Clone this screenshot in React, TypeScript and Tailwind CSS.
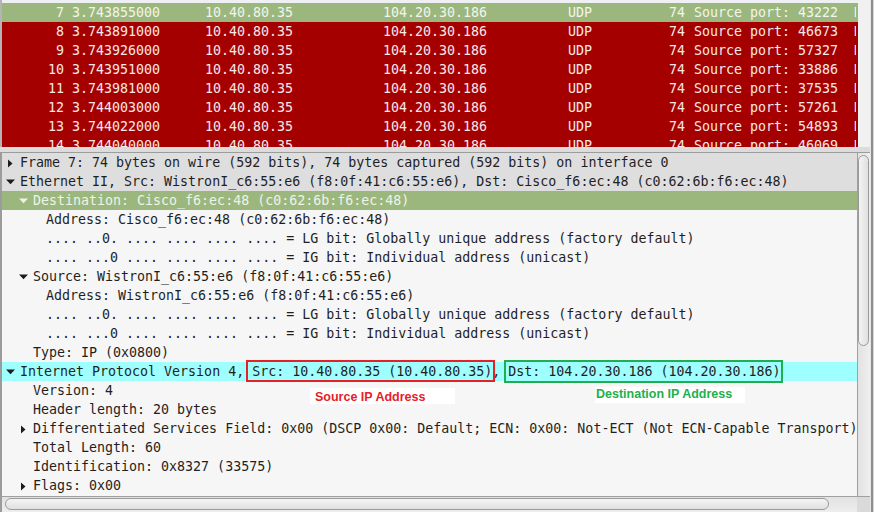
import clsx from "clsx";

const PACKETS = [
  { no: 7, time: "3.743855000", port: "43222", sel: true },
  { no: 8, time: "3.743891000", port: "46673" },
  { no: 9, time: "3.743926000", port: "57327" },
  { no: 10, time: "3.743951000", port: "33886" },
  { no: 11, time: "3.743981000", port: "37535" },
  { no: 12, time: "3.744003000", port: "57261" },
  { no: 13, time: "3.744022000", port: "54893" },
  { no: 14, time: "3.744040000", port: "46069" },
];

type Node = {
  level: 0 | 1 | 2;
  exp?: "open" | "closed";
  text: string;
  tone?: "gray" | "green" | "cyan";
};

const TREE: Node[] = [
  { level: 0, exp: "closed", tone: "gray", text: "Frame 7: 74 bytes on wire (592 bits), 74 bytes captured (592 bits) on interface 0" },
  { level: 0, exp: "open", tone: "gray", text: "Ethernet II, Src: WistronI_c6:55:e6 (f8:0f:41:c6:55:e6), Dst: Cisco_f6:ec:48 (c0:62:6b:f6:ec:48)" },
  { level: 1, exp: "open", tone: "green", text: "Destination: Cisco_f6:ec:48 (c0:62:6b:f6:ec:48)" },
  { level: 2, text: "Address: Cisco_f6:ec:48 (c0:62:6b:f6:ec:48)" },
  { level: 2, text: ".... ..0. .... .... .... .... = LG bit: Globally unique address (factory default)" },
  { level: 2, text: ".... ...0 .... .... .... .... = IG bit: Individual address (unicast)" },
  { level: 1, exp: "open", text: "Source: WistronI_c6:55:e6 (f8:0f:41:c6:55:e6)" },
  { level: 2, text: "Address: WistronI_c6:55:e6 (f8:0f:41:c6:55:e6)" },
  { level: 2, text: ".... ..0. .... .... .... .... = LG bit: Globally unique address (factory default)" },
  { level: 2, text: ".... ...0 .... .... .... .... = IG bit: Individual address (unicast)" },
  { level: 1, text: "Type: IP (0x0800)" },
  { level: 0, exp: "open", tone: "cyan", text: "Internet Protocol Version 4, Src: 10.40.80.35 (10.40.80.35), Dst: 104.20.30.186 (104.20.30.186)" },
  { level: 1, text: "Version: 4" },
  { level: 1, text: "Header length: 20 bytes" },
  { level: 1, exp: "closed", text: "Differentiated Services Field: 0x00 (DSCP 0x00: Default; ECN: 0x00: Not-ECT (Not ECN-Capable Transport))" },
  { level: 1, text: "Total Length: 60" },
  { level: 1, text: "Identification: 0x8327 (33575)" },
  { level: 1, exp: "closed", text: "Flags: 0x00" },
];

const INDENT = ["pl-[4px]", "pl-[17px]", "pl-[30px]"];

function Expander({ exp, light }: { exp?: "open" | "closed"; light?: boolean }) {
  const fill = light ? "#eef3e8" : "#1c1c1c";
  return (
    <svg width="14" height="19" className="shrink-0">
      {exp === "open" && <polygon points="0,7.5 9,7.5 4.5,12.2" fill={fill} />}
      {exp === "closed" && <polygon points="2,6.5 6.5,10.5 2,14.5" fill={fill} />}
    </svg>
  );
}

function PacketRow({ p }: { p: (typeof PACKETS)[number] }) {
  return (
    <div
      className={clsx(
        "flex h-[19px] shrink-0 leading-[19px] whitespace-pre",
        p.sel ? "bg-[#9cb77e] text-[#f1f5ec]" : "bg-[#a40000] text-[#f8e8e8]"
      )}
    >
      <span className="w-[70px] shrink-0 pr-[8px] text-right">{p.no}</span>
      <span className="w-[133px] shrink-0">{p.time}</span>
      <span className="w-[178px] shrink-0">10.40.80.35</span>
      <span className="w-[185px] shrink-0">104.20.30.186</span>
      <span className="w-[101px] shrink-0">UDP</span>
      <span className="w-[25px] shrink-0">74</span>
      <span className="w-[162px] shrink-0 overflow-hidden">Source port: {p.port}  D</span>
    </div>
  );
}

export default function App() {
  return (
    <div className="relative h-[512px] w-[874px] overflow-hidden bg-[#e2e2e2] font-['DejaVu_Sans_Mono',monospace] text-[13.3px] text-[#1f1f1f]">
      <div className="flex h-full">
        <div className="flex w-[870px] flex-col">
          {/* Packet list */}
          <div className="flex h-[147px] border-l-2 border-[#b4b4b4]">
            <div className="flex w-[856px] flex-col overflow-hidden">
              <div className="h-[3px] shrink-0 bg-[#eef0f3]" />
              {PACKETS.map((p) => (
                <PacketRow key={p.no} p={p} />
              ))}
            </div>
            <div className="w-[12px] bg-[#f1f1f1]" />
          </div>

          <div className="h-[5px] bg-[#dcdcdc]" />

          {/* Packet details */}
          <div className="flex h-[360px] flex-col border-l-2 border-t border-[#9c9c9c]">
            <div className="flex h-[343px]">
              <div className="w-[855px] overflow-hidden bg-[#f6f6f6]">
                {TREE.map((n, i) => (
                  <div
                    key={i}
                    className={clsx(
                      "flex h-[19px] overflow-hidden leading-[19px] whitespace-pre",
                      INDENT[n.level],
                      n.tone === "gray" && "bg-[#dedede]",
                      n.tone === "green" && "bg-[#9cb77e] text-[#eef3e8]",
                      n.tone === "cyan" && "bg-[#9ffffe]"
                    )}
                  >
                    <Expander exp={n.exp} light={n.tone === "green"} />
                    <span className="shrink-0">{n.text}</span>
                  </div>
                ))}
              </div>
              {/* vertical scrollbar */}
              <div className="w-[13px] border-l border-[#a0a0a0] bg-gradient-to-r from-[#e2e2e2] to-[#efefef] pt-[2px]">
                <div className="h-[191px] w-[11px] rounded-[6px] border border-[#9a9a9a] bg-gradient-to-r from-[#f4f4f4] to-[#e0e0e0]" />
              </div>
            </div>
            {/* horizontal scrollbar */}
            <div className="flex h-[16px] border-t border-[#a0a0a0]">
              <div className="w-[855px] bg-gradient-to-b from-[#e2e2e2] to-[#eeeeee] pl-[3px] pt-[1px]">
                <div className="h-[12px] w-[824px] rounded-[6px] border border-[#9a9a9a] bg-gradient-to-b from-[#f4f4f4] to-[#e0e0e0]" />
              </div>
              <div className="w-[13px] bg-[#dadada]" />
            </div>
          </div>
        </div>

        <div className="flex w-[4px]">
          <div className="w-[1px] bg-[#e6e6e6]" />
          <div className="w-[2px] bg-[#8e8e8e]" />
          <div className="w-[1px] bg-[#d6d6d6]" />
        </div>
      </div>

      {/* annotations */}
      <div className="absolute left-[246px] top-[360px] h-[22px] w-[249px] border-2 border-[#e52127]" />
      <div className="absolute left-[504px] top-[360px] h-[23px] w-[279px] border-2 border-[#1fae50]" />
      <div className="absolute left-[310px] top-[388px] h-[16px] w-[145px] bg-white pl-[5px] pt-[2px] font-['Liberation_Sans',sans-serif] text-[12.5px] font-bold leading-[14px] text-[#e52127]">
        Source IP Address
      </div>
      <div className="absolute left-[595px] top-[387px] h-[16px] w-[150px] bg-white pl-[1px] font-['Liberation_Sans',sans-serif] text-[12.5px] font-bold leading-[14px] text-[#22b04b]">
        Destination IP Address
      </div>
    </div>
  );
}
